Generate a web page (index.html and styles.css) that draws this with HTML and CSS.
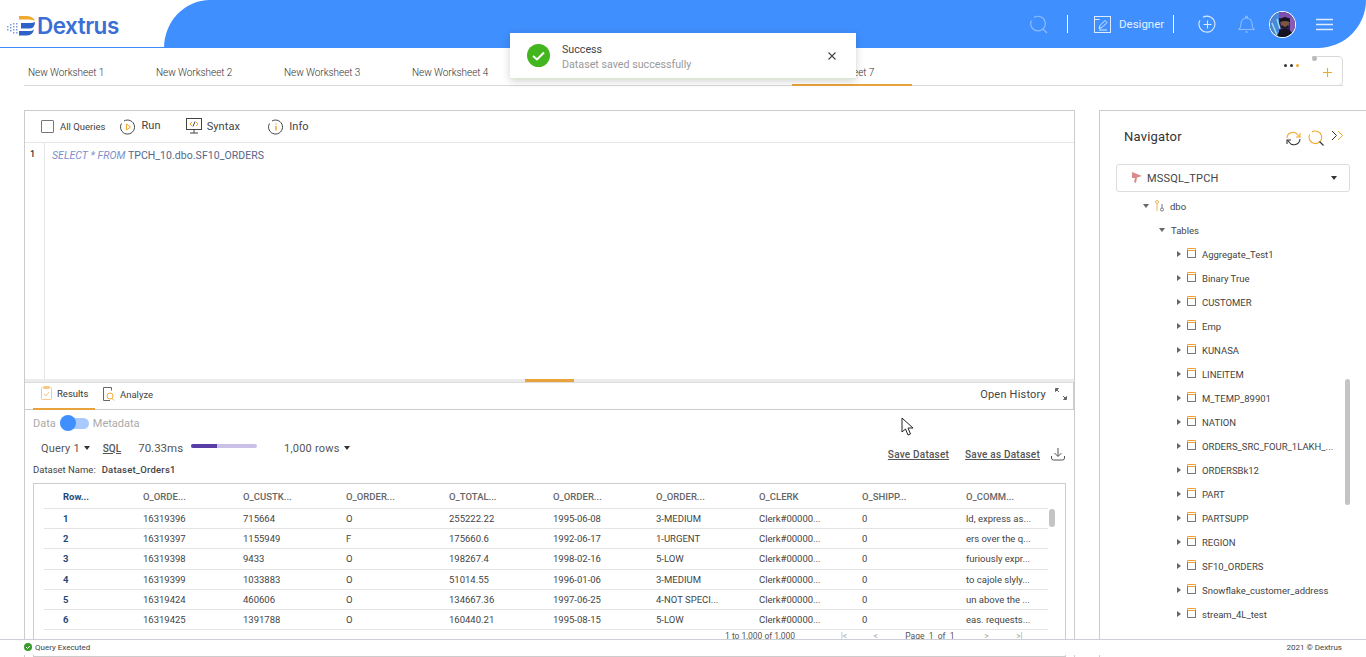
FILE: index.html
```html
<!DOCTYPE html>
<html lang="en">
<head>
  <meta charset="UTF-8">
  <title>Dextrus</title>
  <link rel="stylesheet" href="styles.css">
</head>
<body>
  <div class="header">
    <div class="logo-area">
      <svg class="logo-icon" width="28" height="20" viewBox="0 0 28 20">
        <path d="M12 0h7q7 0 9 5-2-1.500-6-1.500H12z" fill="#f0a92e"/>
        <path d="M14 7h9q3 0 5-1 0 4-2 5.500-1 1-4 1H14z" fill="#2f62c9"/>
        <path d="M12 15h11q2 0 4-1.500-1 6-8 6H12z" fill="#2f62c9"/>
        <g fill="#7f9fdc">
          <rect x="0" y="10" width="1.500" height="1.500"/><rect x="0" y="13" width="1.500" height="1.500"/>
          <rect x="3" y="8" width="1.500" height="1.500"/><rect x="3" y="11" width="1.500" height="1.500"/><rect x="3" y="14" width="1.500" height="1.500"/>
          <rect x="6" y="7" width="1.500" height="1.500"/><rect x="6" y="10" width="1.500" height="1.500"/><rect x="6" y="13" width="1.500" height="1.500"/><rect x="6" y="16" width="1.500" height="1.500"/>
          <rect x="9" y="7" width="1.500" height="1.500"/><rect x="9" y="10" width="1.500" height="1.500"/><rect x="9" y="13" width="1.500" height="1.500"/><rect x="9" y="16" width="1.500" height="1.500"/>
        </g>
      </svg>
      <span class="logo-text">Dextrus</span>
    </div>
    <div class="topbar">
      <svg class="top-search" width="19" height="19" viewBox="0 0 19 19" fill="none" stroke="#8fbcff" stroke-width="1.200"><path d="M5 2.500a7.300 7.300 0 1 1-2.600 3"/><path d="M13.500 13.500l4.500 4.500"/></svg>
      <span class="top-divider first"></span>
      <svg class="top-design" width="17" height="17" viewBox="0 0 17 17" fill="none" stroke="#dcebff" stroke-width="1"><rect x="0.500" y="0.500" width="16" height="16"/><path d="M0.500 3.500h5"/><path d="M5 12.500l1-3 5-5 2 2-5 5z"/><path d="M5 14h8"/></svg>
      <span class="top-label">Designer</span>
      <span class="top-divider"></span>
      <svg class="top-plus" width="19" height="19" viewBox="0 0 19 19" fill="none" stroke="#dcebff" stroke-width="1.100"><path d="M5 2.200a8 8 0 1 1-3 3"/><path d="M9.500 5.500v8M5.500 9.500h8"/></svg>
      <svg class="top-bell" width="17" height="19" viewBox="0 0 17 19" fill="none" stroke="#8fbcff" stroke-width="1.100"><path d="M1 14.500c2-2 2-3 2-6a5.500 5.500 0 0 1 11 0c0 3 0 4 2 6z"/><path d="M7 17h3"/><circle cx="8.500" cy="2" r="1"/></svg>
      <svg class="avatar" width="27" height="27" viewBox="0 0 27 27">
        <defs><clipPath id="av"><circle cx="13.500" cy="13.500" r="12.500"/></clipPath></defs>
        <circle cx="13.500" cy="13.500" r="13.500" fill="#fff"/>
        <g clip-path="url(#av)">
          <rect width="27" height="27" fill="#2b2350"/>
          <rect width="10" height="27" fill="#4d86d8"/>
          <path d="M3 12l5 12M8 8l3 10" stroke="#8fe0f0" stroke-width="1.500"/>
          <rect x="10" width="17" height="7" fill="#7a4fb0"/>
          <rect x="21" y="7" width="6" height="14" fill="#8a5ab8"/>
          <circle cx="16" cy="11.500" r="4.500" fill="#7a5745"/>
          <path d="M11 9q5-6 10 0v2q-5-2-10 0z" fill="#14101c"/>
          <path d="M13 14q3 4 6 0v2q-3 3-6 0z" fill="#1c1418"/>
          <path d="M8 27q1-9 8-9t9 9z" fill="#15131f"/>
        </g>
      </svg>
      <svg class="top-menu" width="17" height="13" viewBox="0 0 17 13" stroke="#dcebff" stroke-width="1.500"><path d="M0 1.500h17M0 6.500h17M0 11.500h17"/></svg>
    </div>
  </div>

  <div class="tabs-row">
    <div class="tab">New Worksheet 1</div>
    <div class="tab">New Worksheet 2</div>
    <div class="tab">New Worksheet 3</div>
    <div class="tab">New Worksheet 4</div>
    <div class="tab"></div>
    <div class="tab"></div>
    <div class="tab active">New Worksheet 7</div>
    <div class="tab-tools">
      <span class="dots"><i></i><i></i><i class="orange"></i></span>
      <div class="add-tab"><span class="add-dot"></span><svg width="11" height="11" viewBox="0 0 11 11" fill="none" stroke="#f0a92e" stroke-width="1.200"><path d="M5.500 1v9M1 5.500h9"/></svg></div>
    </div>
  </div>

  <div class="main">
    <div class="work-panel">
      <div class="toolbar">
        <span class="checkbox"></span>
        <span class="tool-all">All Queries</span>
        <svg class="tool-ico run-ico" width="16" height="16" viewBox="0 0 16 16" fill="none" stroke="#444" stroke-width="1"><path d="M4 2a7 7 0 1 1-2.500 2.500"/><path d="M6.500 5l4 3-4 3z" stroke="#f0a92e"/></svg>
        <span class="tool-text run-text">Run</span>
        <svg class="tool-ico syntax-ico" width="16" height="16" viewBox="0 0 16 16" fill="none" stroke="#444" stroke-width="1"><rect x="0.500" y="0.500" width="15" height="11"/><path d="M8 12v3M4 15h8"/><path d="M6 4L4 6l2 2M10 4l2 2-2 2" stroke="#f0a92e"/><path d="M9 3.500L7 8.500"/></svg>
        <span class="tool-text syntax-text">Syntax</span>
        <svg class="tool-ico info-ico" width="16" height="16" viewBox="0 0 16 16" fill="none" stroke="#444" stroke-width="1"><path d="M4 2a7 7 0 1 1-2.500 2.500"/><path d="M8 7v4.500" stroke="#f0a92e" stroke-width="1.500"/><path d="M8 4.500v1" stroke="#f0a92e" stroke-width="1.500"/></svg>
        <span class="tool-text">Info</span>
      </div>
      <div class="editor">
        <div class="gutter">1</div>
        <div class="code"><em>SELECT * FROM</em> TPCH_10.dbo.SF10_ORDERS</div>
      </div>
      <div class="splitter"><span></span></div>
      <div class="results-bar">
        <div class="res-tab active">
          <svg width="11" height="14" viewBox="0 0 11 14" fill="none" stroke="#f4c98a" stroke-width="1"><rect x="0.500" y="1.500" width="10" height="12" rx="1"/><rect x="3" y="0.500" width="5" height="2"/><path d="M3 8l2 2 3-4"/></svg>
          Results
        </div>
        <div class="res-tab">
          <svg width="12" height="14" viewBox="0 0 12 14" fill="none" stroke="#666" stroke-width="1"><path d="M7 13.500H.5v-13h8v3"/><circle cx="7" cy="9" r="3" stroke="#f0a92e"/><path d="M9 11.500l2 2" stroke="#f0a92e"/></svg>
          Analyze
        </div>
        <div class="history">
          Open History
          <svg width="12" height="12" viewBox="0 0 12 12" fill="#666" stroke="#666"><path d="M0.500 0.500h3l-3 3zM11.500 11.500h-3l3-3z"/><path d="M1 1l3 3M11 11L8 8"/></svg>
        </div>
      </div>
      <div class="results-body">
        <div class="toggle-row">
          <span>Data</span>
          <span class="toggle"><i></i></span>
          <span>Metadata</span>
        </div>
        <div class="query-row">
          <span class="q-name">Query 1</span><span class="caret"></span>
          <span class="q-sql">SQL</span>
          <span class="q-time">70.33ms</span>
          <span class="q-bar"><i></i></span>
          <span class="q-rows">1,000 rows</span><span class="caret"></span>
          <div class="save-links">
            <span>Save Dataset</span>
            <span>Save as Dataset</span>
            <svg width="14" height="14" viewBox="0 0 14 14" fill="none" stroke="#555" stroke-width="1"><path d="M7 1v8M3.500 6L7 9.500 10.500 6"/><path d="M.5 9v2q0 2 2 2h9q2 0 2-2V9"/></svg>
          </div>
        </div>
        <div class="dataset-name">Dataset Name:<span>Dataset_Orders1</span></div>
        <div class="grid-box">
          <div class="grid-row head"><div class="rownum">Row...</div><div>O_ORDE...</div><div>O_CUSTK...</div><div>O_ORDER...</div><div>O_TOTAL...</div><div>O_ORDER...</div><div>O_ORDER...</div><div>O_CLERK</div><div>O_SHIPP...</div><div>O_COMM...</div></div>
          <div class="grid-row"><div class="rownum">1</div><div>16319396</div><div>715664</div><div>O</div><div>255222.22</div><div>1995-06-08</div><div>3-MEDIUM</div><div>Clerk#00000...</div><div>0</div><div>ld, express as...</div></div>
          <div class="grid-row"><div class="rownum">2</div><div>16319397</div><div>1155949</div><div>F</div><div>175660.6</div><div>1992-06-17</div><div>1-URGENT</div><div>Clerk#00000...</div><div>0</div><div>ers over the q...</div></div>
          <div class="grid-row"><div class="rownum">3</div><div>16319398</div><div>9433</div><div>O</div><div>198267.4</div><div>1998-02-16</div><div>5-LOW</div><div>Clerk#00000...</div><div>0</div><div>furiously expr...</div></div>
          <div class="grid-row"><div class="rownum">4</div><div>16319399</div><div>1033883</div><div>O</div><div>51014.55</div><div>1996-01-06</div><div>3-MEDIUM</div><div>Clerk#00000...</div><div>0</div><div>to cajole slyly...</div></div>
          <div class="grid-row"><div class="rownum">5</div><div>16319424</div><div>460606</div><div>O</div><div>134667.36</div><div>1997-06-25</div><div>4-NOT SPECI...</div><div>Clerk#00000...</div><div>0</div><div>un above the ...</div></div>
          <div class="grid-row"><div class="rownum">6</div><div>16319425</div><div>1391788</div><div>O</div><div>160440.21</div><div>1995-08-15</div><div>5-LOW</div><div>Clerk#00000...</div><div>0</div><div>eas. requests...</div></div>
          <div class="pager">
            <span class="pager-count">1 to 1,000 of 1,000</span>
            <span class="pager-btn first">|&lt;</span>
            <span class="pager-btn">&lt;</span>
            <span class="pager-page">Page&nbsp; 1 &nbsp;of&nbsp; 1</span>
            <span class="pager-btn">&gt;</span>
            <span class="pager-btn">&gt;|</span>
          </div>
          <span class="grid-scroll"></span>
        </div>
      </div>
    </div>

    <div class="nav-panel">
      <div class="nav-head">
        <span class="nav-title">Navigator</span>
        <svg class="nav-refresh" width="15" height="15" viewBox="0 0 15 15" fill="none" stroke-width="1.100"><path d="M1 7a6 6 0 0 1 11-3l1.500 2" stroke="#f0a92e"/><path d="M14 2v4h-4" stroke="#f0a92e"/><path d="M14 8a6 6 0 0 1-11 3L1.500 9" stroke="#333"/><path d="M1 13V9h4" stroke="#333"/></svg>
        <svg class="nav-search" width="16" height="16" viewBox="0 0 16 16" fill="none" stroke-width="1.100"><path d="M4 2a6.300 6.300 0 1 1-2.300 2.600" stroke="#f0a92e"/><path d="M11.500 11.500l4 4" stroke="#333"/></svg>
        <svg class="nav-chev" width="13" height="11" viewBox="0 0 13 11" fill="none" stroke-width="1"><path d="M1 1l4.500 4.500L1 10" stroke="#333"/><path d="M7 1l4.500 4.500L7 10" stroke="#f0a92e"/></svg>
      </div>
      <div class="nav-select">
        <svg width="11" height="12" viewBox="0 0 11 12" fill="#d98a8a"><path d="M1 0l10 4-5 1.500-1 5.500-2-1 1-4L1 6z"/></svg>
        <span>MSSQL_TPCH</span>
        <span class="caret dark"></span>
      </div>
      <div class="tree">
        <div class="tree-row lvl1"><span class="tw open"></span><svg width="9" height="12" viewBox="0 0 9 12" fill="none" stroke="#f0b45a"><circle cx="2" cy="2" r="1.500"/><path d="M2 3.500V11"/><circle cx="7" cy="9.500" r="1.500" stroke="#777"/><path d="M7 8V4" stroke="#777"/></svg><span>dbo</span></div>
        <div class="tree-row lvl2"><span class="tw open"></span><span>Tables</span></div>
        <div class="tree-row lvl3"><span class="tw"></span><span class="tbl"></span><span>Aggregate_Test1</span></div>
        <div class="tree-row lvl3"><span class="tw"></span><span class="tbl"></span><span>Binary True</span></div>
        <div class="tree-row lvl3"><span class="tw"></span><span class="tbl"></span><span>CUSTOMER</span></div>
        <div class="tree-row lvl3"><span class="tw"></span><span class="tbl"></span><span>Emp</span></div>
        <div class="tree-row lvl3"><span class="tw"></span><span class="tbl"></span><span>KUNASA</span></div>
        <div class="tree-row lvl3"><span class="tw"></span><span class="tbl"></span><span>LINEITEM</span></div>
        <div class="tree-row lvl3"><span class="tw"></span><span class="tbl"></span><span>M_TEMP_89901</span></div>
        <div class="tree-row lvl3"><span class="tw"></span><span class="tbl"></span><span>NATION</span></div>
        <div class="tree-row lvl3"><span class="tw"></span><span class="tbl"></span><span>ORDERS_SRC_FOUR_1LAKH_...</span></div>
        <div class="tree-row lvl3"><span class="tw"></span><span class="tbl"></span><span>ORDERSBk12</span></div>
        <div class="tree-row lvl3"><span class="tw"></span><span class="tbl"></span><span>PART</span></div>
        <div class="tree-row lvl3"><span class="tw"></span><span class="tbl"></span><span>PARTSUPP</span></div>
        <div class="tree-row lvl3"><span class="tw"></span><span class="tbl"></span><span>REGION</span></div>
        <div class="tree-row lvl3"><span class="tw"></span><span class="tbl"></span><span>SF10_ORDERS</span></div>
        <div class="tree-row lvl3"><span class="tw"></span><span class="tbl"></span><span>Snowflake_customer_address</span></div>
        <div class="tree-row lvl3"><span class="tw"></span><span class="tbl"></span><span>stream_4L_test</span></div>
      </div>
      <span class="nav-scroll"></span>
    </div>
  </div>

  <div class="footer">
    <span class="footer-status">
      <svg width="8" height="8" viewBox="0 0 8 8"><circle cx="4" cy="4" r="4" fill="#3a9a2c"/><path d="M2 4l1.500 1.500L6 3" fill="none" stroke="#fff"/></svg>
      Query Executed
    </span>
    <span>2021 © Dextrus</span>
  </div>

  <div class="toast">
    <svg width="23" height="23" viewBox="0 0 23 23"><circle cx="11.500" cy="11.500" r="11.500" fill="#43b51f"/><path d="M6 12l4 3.500 7-7" fill="none" stroke="#fff" stroke-width="2"/></svg>
    <div class="toast-body">
      <div class="toast-title">Success</div>
      <div class="toast-msg">Dataset saved successfully</div>
    </div>
    <svg class="toast-close" width="8" height="8" viewBox="0 0 8 8" stroke="#444" stroke-width="1.100"><path d="M.5.500l7 7M7.500.500l-7 7"/></svg>
  </div>

  <svg class="mouse" width="14" height="20" viewBox="0 0 14 20"><path d="M1 1v14l3.500-3 2.500 6 2.500-1-2.500-6H12z" fill="#fff" stroke="#222" stroke-width="1"/></svg>
</body>
</html>
```

FILE: styles.css
```css
* {
  margin: 0;
  padding: 0;
  box-sizing: border-box;
}
html, body {
  height: 657px;
  overflow: hidden;
}
body {
  position: relative;
  display: flex;
  flex-direction: column;
  font-family: 'Roboto', 'Liberation Sans', sans-serif;
  font-size: 11px;
  color: #444;
  background: #fff;
}

/* header */
.header {
  display: flex;
  height: 48px;
  flex-shrink: 0;
}
.logo-area {
  width: 164px;
  height: 48px;
  border-bottom: 1px solid #3f8cff;
  display: flex;
  align-items: flex-start;
  padding: 16px 0 0 7px;
}
.logo-text {
  font-family: 'Inter', 'Roboto', sans-serif;
  font-size: 22.500px;
  line-height: 20px;
  font-weight: 600;
  color: #3a6fd4;
  margin-left: 2px;
  letter-spacing: -0.5px;
}
.topbar {
  flex: 1;
  background: #3f8fff;
  border-radius: 46px 0 48px 0 / 48px 0 48px 0;
  display: flex;
  align-items: center;
  color: #e6f0ff;
}
.top-search { margin-left: 865px; }
.top-divider {
  width: 1px;
  height: 18px;
  background: #fff;
  margin-left: 9px;
}
.top-divider.first { margin-left: 19px; margin-right: 26px; }
.top-label {
  font-size: 11.500px;
  margin-left: 8px;
}
.top-plus { margin-left: 24px; }
.top-bell { margin-left: 21px; }
.avatar { margin-left: 14px; }
.top-menu { margin-left: 20px; }

/* worksheet tabs */
.tabs-row {
  display: flex;
  height: 38px;
  margin: 0 23px 0 24px;
  border-bottom: 1px solid #d8d8d8;
  flex-shrink: 0;
}
.tab {
  width: 128px;
  padding: 19px 0 0 4px;
  font-size: 10px;
  font-weight: 300;
  letter-spacing: -0.05px;
  color: #333;
}
.tab.active {
  width: 120px;
  height: 38px;
  padding-left: 6px;
  border-bottom: 2px solid #e8a33c;
}
.tab-tools {
  flex: 1;
  display: flex;
  align-items: flex-end;
  justify-content: flex-end;
  position: relative;
}
.dots {
  display: flex;
  gap: 3px;
  margin: 0 13px 18px 0;
}
.dots i {
  width: 3px;
  height: 3px;
  border-radius: 50%;
  background: #333;
}
.dots i.orange { background: #f0a92e; }
.add-tab {
  position: relative;
  width: 31px;
  height: 30px;
  border: 1px solid #d8d8d8;
  border-left: 0;
  border-radius: 0 5px 5px 0;
  margin-bottom: -1px;
  padding: 10px 0 0 10px;
  line-height: 0;
}
.add-dot {
  position: absolute;
  left: 0;
  top: -1px;
  width: 5px;
  height: 5px;
  border-radius: 50%;
  background: #bbb;
}

/* panels */
.main {
  flex: 1;
  display: flex;
  min-height: 0;
  margin-top: 24px;
  padding-left: 24px;
  gap: 24px;
}
.work-panel {
  width: 1051px;
  border: 1px solid #ccc;
  border-bottom: 0;
  display: flex;
  flex-direction: column;
}
.toolbar {
  height: 32px;
  flex-shrink: 0;
  border-bottom: 1px solid #e6e6e6;
  display: flex;
  align-items: center;
  padding-left: 16px;
}
.checkbox {
  width: 13px;
  height: 13px;
  border: 1px solid #777;
  border-radius: 1px;
}
.tool-all {
  font-size: 9.500px;
  margin-left: 6px;
}
.run-ico { margin-left: 15px; }
.tool-text {
  margin-left: 5px;
  font-size: 11px;
  letter-spacing: 0.1px;
}
.run-text { margin-top: -2px; }
.syntax-ico { margin-left: 25px; margin-top: -2px; }
.info-ico { margin-left: 28px; }

.editor {
  height: 236px;
  flex-shrink: 0;
  display: flex;
}
.gutter {
  width: 20px;
  border-right: 1px solid #e6e6e6;
  font-size: 9px;
  font-weight: 500;
  padding: 6px 0 0 5px;
  color: #333;
}
.code {
  padding: 6px 0 0 7px;
  font-size: 10.500px;
  letter-spacing: 0.05px;
  color: #54678a;
}
.code em {
  color: #7d8fcb;
  font-style: italic;
}
.splitter {
  height: 3px;
  flex-shrink: 0;
  background: #ececec;
  display: flex;
  justify-content: center;
}
.splitter span {
  width: 49px;
  height: 3px;
  background: #e8a33c;
}
.results-bar {
  height: 28px;
  flex-shrink: 0;
  border-bottom: 1px solid #ccc;
  border-right: 1px solid #ccc;
  border-top: 1px solid #ddd;
  display: flex;
  padding-left: 8px;
}
.res-tab {
  display: flex;
  align-items: center;
  gap: 5px;
  font-size: 9.500px;
  padding: 0 1px 5px 8px;
  margin-bottom: -1px;
}
.res-tab.active {
  width: 62px;
  border-bottom: 2px solid #e8a33c;
  color: #333;
}
.history {
  margin-left: auto;
  display: flex;
  align-items: center;
  gap: 9px;
  padding: 0 6px 4px 0;
  font-size: 11px;
  letter-spacing: 0.2px;
}
.results-body {
  flex: 1;
  min-height: 0;
  padding: 0 7px 0 8px;
  display: flex;
  flex-direction: column;
}
.toggle-row {
  display: flex;
  align-items: center;
  gap: 4px;
  height: 16px;
  margin-top: 5px;
  color: #aaa;
  font-size: 11px;
}
.toggle {
  position: relative;
  width: 29px;
  height: 11px;
  border-radius: 6px;
  background: #a8caff;
}
.toggle i {
  position: absolute;
  left: 0;
  top: -3px;
  width: 16px;
  height: 16px;
  border-radius: 50%;
  background: #3f8fff;
}
.query-row {
  display: flex;
  align-items: center;
  height: 20px;
  margin-top: 7px;
  padding-left: 8px;
  color: #555;
  position: relative;
}
.caret {
  width: 0;
  height: 0;
  border: 3.500px solid transparent;
  border-top: 4px solid #333;
  border-bottom: 0;
  margin-left: 4px;
}
.q-name { letter-spacing: 0.2px; }
.q-sql {
  margin-left: 13px;
  text-decoration: underline;
  font-weight: 500;
  font-size: 10px;
}
.q-time {
  margin-left: 17px;
  font-size: 11.500px;
}
.q-bar {
  width: 66px;
  height: 4px;
  margin: -5px 0 0 8px;
  background: #cbc0e6;
  border-radius: 2px;
  overflow: hidden;
}
.q-bar i {
  display: block;
  width: 26px;
  height: 4px;
  background: #5a3ea8;
}
.q-rows {
  margin-left: 27px;
  letter-spacing: 0.2px;
}
.save-links {
  position: absolute;
  right: 2px;
  top: 9px;
  display: flex;
  align-items: center;
  font-size: 10px;
  letter-spacing: 0.22px;
}
.save-links span {
  text-decoration: underline;
  margin-right: 16px;
  font-weight: 500;
}
.save-links span + span { margin-right: 11px; }
.dataset-name {
  font-size: 9.500px;
  margin-top: 6px;
  height: 17px;
  line-height: 12px;
  color: #444;
}
.dataset-name span {
  margin-left: 6px;
  font-weight: 500;
  letter-spacing: 0.2px;
}
.grid-box {
  position: relative;
  margin-top: 2px;
  width: 1033px;
  flex: 1;
  border: 1px solid #ccc;
  padding: 5px 17px 0 10px;
  overflow: hidden;
}
.grid-row {
  display: grid;
  grid-template-columns: 80px 100px 103px 103px 104px 103px 103px 103px 104px 1fr;
  height: 20.200px;
  line-height: 20px;
  padding-left: 19px;
  border-bottom: 1px solid #e4e4e4;
  font-size: 9.500px;
  color: #444;
}
.grid-row.head {
  height: 20px;
  line-height: 16px;
  font-weight: 500;
  color: #666;
  font-size: 9.500px;
}
.rownum {
  color: #1f4a78;
  font-weight: 700;
}
.pager {
  position: relative;
  display: flex;
  align-items: center;
  height: 14px;
  margin-top: -1px;
  padding-left: 681px;
  font-size: 8.500px;
  color: #555;
}
.pager-count { width: 120px; }
.pager-btn {
  width: 33px;
  color: #aaa;
}
.pager-btn.first { width: 34px; }
.pager-page {
  width: 82px;
}
.grid-scroll {
  position: absolute;
  left: 1015px;
  top: 25px;
  width: 6px;
  height: 18px;
  border-radius: 3px;
  background: #c4c4c4;
}

/* navigator */
.nav-panel {
  flex: 1;
  position: relative;
  border: 1px solid #ccc;
  border-right: 0;
  border-bottom: 0;
  min-width: 0;
}
.nav-head {
  display: flex;
  align-items: center;
  height: 53px;
  padding: 0 0 2px 24px;
}
.nav-title {
  font-size: 13px;
  color: #333;
  letter-spacing: 0.2px;
}
.nav-refresh { margin-left: 104px; margin-top: 3px; }
.nav-search { margin-left: 7px; margin-top: 3px; }
.nav-chev { margin-left: 7px; margin-top: -2px; }
.nav-select {
  display: flex;
  align-items: center;
  gap: 5px;
  width: 234px;
  height: 28px;
  margin-left: 16px;
  padding: 0 12px 0 14px;
  border: 1px solid #ddd;
  border-radius: 3px;
  font-size: 11px;
  letter-spacing: 0.2px;
  color: #444;
}
.caret.dark { margin-left: auto; }
.tree {
  padding-top: 2px;
  font-size: 9.500px;
  color: #444;
}
.tree-row {
  display: flex;
  align-items: center;
  height: 24px;
}
.lvl1 { padding-left: 43px; }
.lvl2 { padding-left: 59px; }
.lvl3 { padding-left: 76px; }
.tw {
  width: 0;
  height: 0;
  border-left: 4px solid #666;
  border-top: 3px solid transparent;
  border-bottom: 3px solid transparent;
  margin-left: 1px;
}
.tw.open {
  border: 3px solid transparent;
  border-top: 4px solid #666;
  border-bottom: 0;
  margin-left: 0;
}
.lvl1 svg { margin-left: 6px; margin-right: 6px; }
.lvl2 .tw { margin-right: 6px; }
.tbl {
  width: 9px;
  height: 10px;
  border: 1px solid #777;
  border-top: 3px double #e8a33c;
  border-radius: 1px;
  margin: -2px 6px 0 6px;
}
.nav-scroll {
  position: absolute;
  left: 245px;
  top: 268px;
  width: 5px;
  height: 126px;
  border-radius: 3px;
  background: #c4c4c4;
}

/* overlays */
.footer {
  position: absolute;
  left: 0;
  right: 0;
  bottom: 2px;
  height: 16px;
  background: #fff;
  border-top: 1px solid #ccd0d6;
  display: flex;
  align-items: center;
  justify-content: space-between;
  padding: 0 24px 1px;
  font-size: 8px;
  color: #444;
}
.footer-status {
  display: flex;
  align-items: center;
  gap: 3px;
}
.toast {
  position: absolute;
  left: 510px;
  top: 33px;
  width: 346px;
  height: 46px;
  background: #fff;
  border-bottom: 1px solid #d8eccf;
  box-shadow: 0 2px 8px rgba(0, 0, 0, 0.18);
  display: flex;
  align-items: center;
  padding: 0 20px 0 17px;
}
.toast-body {
  margin-left: 12px;
  padding-top: 2px;
  font-size: 10.700px;
  line-height: 15px;
}
.toast-title { color: #444; }
.toast-msg { color: #999; }
.toast-close { margin-left: auto; }
.mouse {
  position: absolute;
  left: 901px;
  top: 417px;
}
```
